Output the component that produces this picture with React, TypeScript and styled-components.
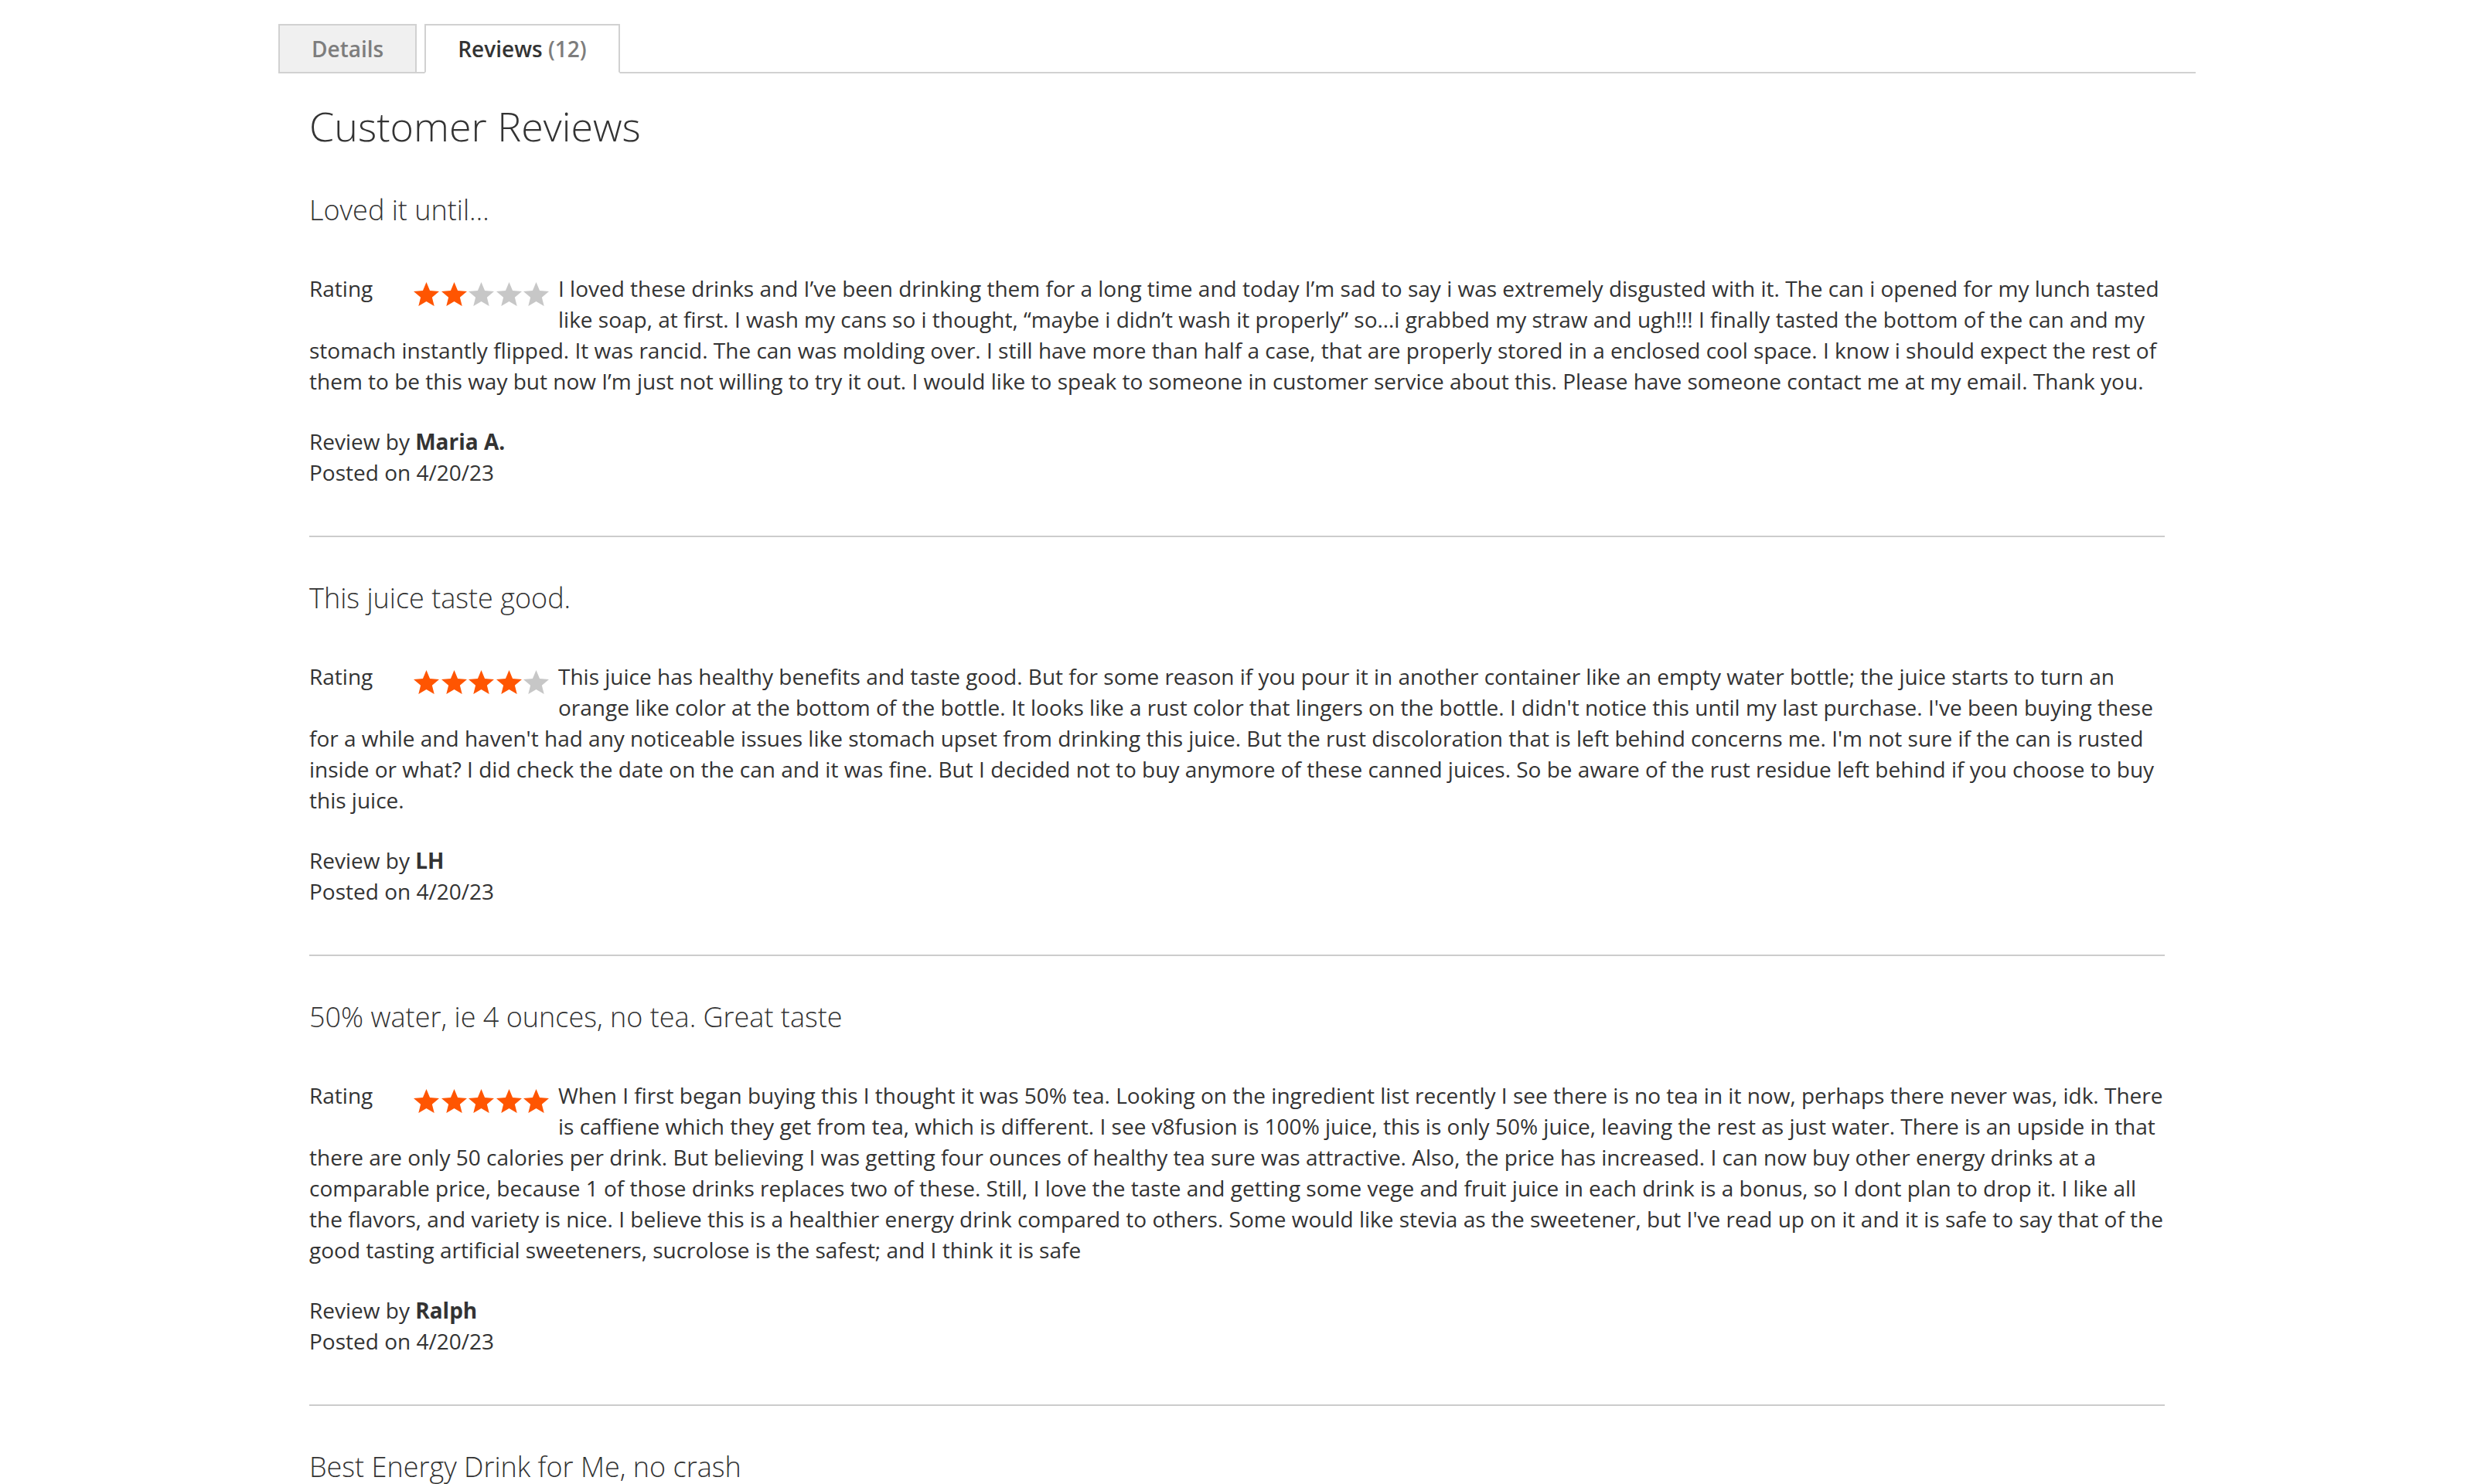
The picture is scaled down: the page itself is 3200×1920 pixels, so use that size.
import React from 'react'
import styled, { createGlobalStyle } from 'styled-components'

const GlobalStyle = createGlobalStyle`
    body {
        margin: 0;
        background: #fff;
        color: #333;
        font-family: "Open Sans", "Liberation Sans", sans-serif;
    }
`

const Page = styled.div`
    width: 2480px;
    padding: 31px 0 0 360px;
`

const TabBar = styled.div`
    display: flex;
    gap: 10px;
    border-bottom: 2px solid #d1d1d1;
`

const Tab = styled.div<{ $active?: boolean }>`
    box-sizing: border-box;
    height: 64px;
    margin-bottom: -2px;
    padding: 0 41px;
    display: flex;
    align-items: center;
    border: 2px solid #d1d1d1;
    border-bottom-color: ${(p) => (p.$active ? '#fff' : '#d1d1d1')};
    background: ${(p) => (p.$active ? '#fff' : '#f0f0f0')};
    color: ${(p) => (p.$active ? '#333' : '#7d7d7d')};
    font-size: 28px;
    font-weight: 600;
    white-space: pre;
`

const TabCount = styled.span`
    color: #7d7d7d;
`

const Panel = styled.section`
    padding: 0 40px;
`

const Heading = styled.h2`
    margin: 39px 0 2px;
    font-size: 52px;
    line-height: 57px;
    font-weight: 300;
    color: #333;
`

const ReviewList = styled.ol`
    list-style: none;
    margin: 0;
    padding: 0;
`

const ReviewItem = styled.li`
    padding: 59px 0 62px;
    border-bottom: 2px solid #cccccc;
`

const ReviewTitle = styled.div`
    font-size: 36px;
    line-height: 40px;
    font-weight: 300;
    margin-bottom: 61px;
`

const ReviewBody = styled.div`
    font-size: 28px;
    line-height: 40px;
    &::after {
        content: '';
        display: block;
        clear: both;
    }
`

const RatingBlock = styled.div`
    float: left;
    display: flex;
    align-items: flex-start;
    width: 310px;
    height: 44px;
    margin-right: 12px;
`

const RatingLabel = styled.span`
    width: 135px;
    flex: none;
`

const Stars = styled.div`
    display: flex;
    gap: 2.5px;
    margin-top: 12px;
`

const StarIcon = styled.svg<{ $on: boolean }>`
    width: 33px;
    height: 31px;
    fill: ${(p) => (p.$on ? '#ff5501' : '#c7c7c7')};
`

const Details = styled.div`
    margin-top: 38px;
    font-size: 28px;
    line-height: 40px;
`

const Author = styled.strong`
    font-weight: 700;
`

function Star({ on }: { on: boolean }) {
    return (
        <StarIcon $on={on} viewBox="1.5 1.5 21 20" preserveAspectRatio="none">
            <polygon points="12,1.5 14.9,8.6 22.5,9.2 16.7,14.2 18.5,21.5 12,17.6 5.5,21.5 7.3,14.2 1.5,9.2 9.1,8.6" />
        </StarIcon>
    )
}

const reviews = [
    {
        title: 'Loved it until…',
        rating: 2,
        author: 'Maria A.',
        date: '4/20/23',
        text: 'I loved these drinks and I’ve been drinking them for a long time and today I’m sad to say i was extremely disgusted with it. The can i opened for my lunch tasted like soap, at first. I wash my cans so i thought, “maybe i didn’t wash it properly” so…i grabbed my straw and ugh!!! I finally tasted the bottom of the can and my stomach instantly flipped. It was rancid. The can was molding over. I still have more than half a case, that are properly stored in a enclosed cool space. I know i should expect the rest of them to be this way but now I’m just not willing to try it out. I would like to speak to someone in customer service about this. Please have someone contact me at my email. Thank you.',
    },
    {
        title: 'This juice taste good.',
        rating: 4,
        author: 'LH',
        date: '4/20/23',
        text: "This juice has healthy benefits and taste good. But for some reason if you pour it in another container like an empty water bottle; the juice starts to turn an orange like color at the bottom of the bottle. It looks like a rust color that lingers on the bottle. I didn't notice this until my last purchase. I've been buying these for a while and haven't had any noticeable issues like stomach upset from drinking this juice. But the rust discoloration that is left behind concerns me. I'm not sure if the can is rusted inside or what? I did check the date on the can and it was fine. But I decided not to buy anymore of these canned juices. So be aware of the rust residue left behind if you choose to buy this juice.",
    },
    {
        title: '50% water, ie 4 ounces, no tea. Great taste',
        rating: 5,
        author: 'Ralph',
        date: '4/20/23',
        text: "When I first began buying this I thought it was 50% tea. Looking on the ingredient list recently I see there is no tea in it now, perhaps there never was, idk. There is caffiene which they get from tea, which is different. I see v8fusion is 100% juice, this is only 50% juice, leaving the rest as just water. There is an upside in that there are only 50 calories per drink. But believing I was getting four ounces of healthy tea sure was attractive. Also, the price has increased. I can now buy other energy drinks at a comparable price, because 1 of those drinks replaces two of these. Still, I love the taste and getting some vege and fruit juice in each drink is a bonus, so I dont plan to drop it. I like all the flavors, and variety is nice. I believe this is a healthier energy drink compared to others. Some would like stevia as the sweetener, but I've read up on it and it is safe to say that of the good tasting artificial sweeteners, sucrolose is the safest; and I think it is safe",
    },
]

export default function App() {
    return (
        <>
            <GlobalStyle />
            <Page>
                <TabBar>
                    <Tab>Details</Tab>
                    <Tab $active>
                        Reviews <TabCount>(12)</TabCount>
                    </Tab>
                </TabBar>
                <Panel>
                    <Heading>Customer Reviews</Heading>
                    <ReviewList>
                        {reviews.map((r) => (
                            <ReviewItem key={r.title}>
                                <ReviewTitle>{r.title}</ReviewTitle>
                                <ReviewBody>
                                    <RatingBlock>
                                        <RatingLabel>Rating</RatingLabel>
                                        <Stars>
                                            {[1, 2, 3, 4, 5].map((n) => (
                                                <Star key={n} on={n <= r.rating} />
                                            ))}
                                        </Stars>
                                    </RatingBlock>
                                    {r.text}
                                </ReviewBody>
                                <Details>
                                    <div>
                                        Review by <Author>{r.author}</Author>
                                    </div>
                                    <div>Posted on {r.date}</div>
                                </Details>
                            </ReviewItem>
                        ))}
                        <ReviewItem>
                            <ReviewTitle>Best Energy Drink for Me, no crash</ReviewTitle>
                        </ReviewItem>
                    </ReviewList>
                </Panel>
            </Page>
        </>
    )
}
